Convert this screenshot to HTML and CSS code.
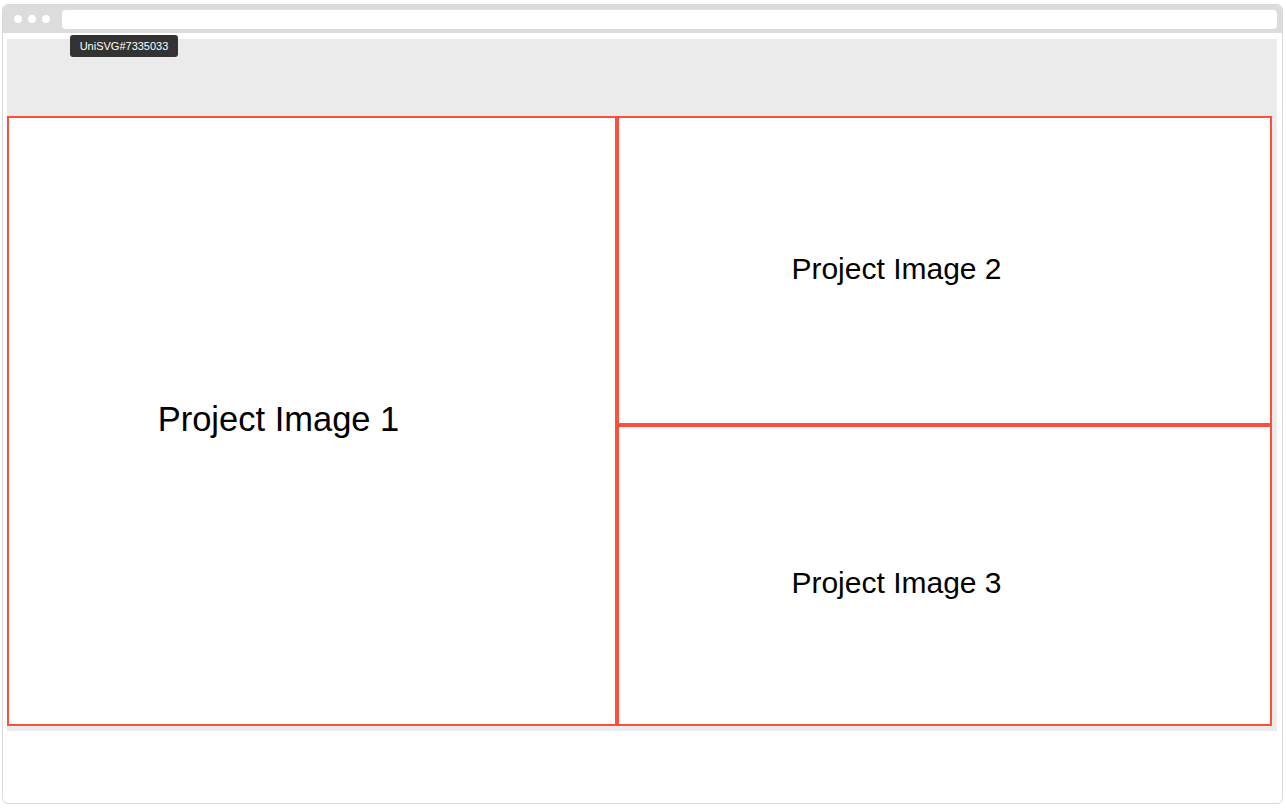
FILE: index.html
```html
<!DOCTYPE html>
<html lang="en">
<head>
<meta charset="utf-8">
<title>Project Gallery</title>
<link rel="stylesheet" href="styles.css">
</head>
<body>
<div class="window">
  <div class="titlebar">
    <div class="dots"><span class="dot"></span><span class="dot"></span><span class="dot"></span></div>
    <div class="url"></div>
  </div>
  <div class="viewport">
    <div class="canvas">
      <div class="header"></div>
      <div class="grid">
        <div class="tile tile-main"><span class="label label-lg">Project Image 1</span></div>
        <div class="col">
          <div class="tile tile-top"><span class="label">Project Image 2</span></div>
          <div class="tile tile-bottom"><span class="label">Project Image 3</span></div>
        </div>
      </div>
    </div>
  </div>
  <div class="tooltip">UniSVG#7335033</div>
</div>
</body>
</html>
```

FILE: styles.css
```css
* { box-sizing: border-box; }
html, body { margin: 0; padding: 0; background: #ffffff; }
body { font-family: "Liberation Sans", Arial, sans-serif; }

.window {
  position: relative;
  margin: 4px 0 0 2px;
  width: 1281px;
  height: 800px;
  border: 1px solid #d9d9d9;
  border-radius: 6px;
  background: #ffffff;
}

.titlebar {
  display: flex;
  align-items: center;
  height: 28px;
  padding: 4px 5px 4px 11px;
  background: #dcdcdc;
  border-radius: 5px 5px 0 0;
  gap: 12px;
}
.dots { display: flex; gap: 6px; }
.dot { width: 8px; height: 8px; border-radius: 50%; background: #ffffff; }
.url { flex: 1; height: 19px; background: #ffffff; border-radius: 4px; }

.viewport { padding: 6px 4px 0 4px; }
.canvas {
  width: 1270px;
  height: 692px;
  background: #ebebeb;
  display: flex;
  flex-direction: column;
}
.header { height: 77px; }
.grid {
  display: grid;
  grid-template-columns: 610px 655px;
  height: 610px;
}
.col { display: flex; flex-direction: column; }

.tile {
  border: 2px solid #ff4f3b;
  background: #ffffff;
  display: flex;
  align-items: center;
  justify-content: center;
  color: #000000;
}
.tile-main { height: 610px; padding-right: 67px; padding-bottom: 4px; }
.tile-top { height: 309px; padding-right: 96px; padding-bottom: 4px; }
.tile-bottom { height: 301px; padding-right: 96px; padding-top: 15px; }

.label { font-size: 30px; line-height: 1; white-space: nowrap; }
.label-lg { font-size: 34.5px; }

.tooltip {
  position: absolute;
  left: 67px;
  top: 30px;
  width: 108px;
  height: 22px;
  background: #333333;
  color: #ffffff;
  border-radius: 3px;
  font-size: 11px;
  line-height: 22px;
  text-align: center;
}
```
